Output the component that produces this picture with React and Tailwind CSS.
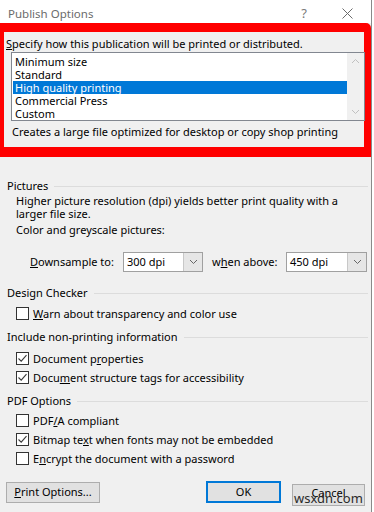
import React from 'react';

const font = { fontFamily: '"Noto Sans", "Open Sans", sans-serif' };

function SectionHeader({ label }) {
  return (
    <div className="flex items-center h-[16px]">
      <span className="text-[11px] leading-[16px] text-black">{label}</span>
      <div className="flex-1 h-px bg-[#dcdcdc] ml-[6px]" />
    </div>
  );
}

function Checkbox({ checked, children }) {
  return (
    <div className="flex items-center h-[19px] pl-[9px]">
      <div className="w-[13px] h-[13px] border border-[#333333] bg-white flex items-center justify-center">
        {checked && (
          <svg width="11" height="11" viewBox="0 0 11 11">
            <path d="M1.5 5.5 L4.2 8.2 L9.5 2.2" fill="none" stroke="#3a3a3a" strokeWidth="1.1" />
          </svg>
        )}
      </div>
      <span className="ml-[4px] text-[11px] leading-[16px] text-black">{children}</span>
    </div>
  );
}

function Chevron() {
  return (
    <svg width="9" height="6" viewBox="0 0 9 6">
      <path d="M1 1 L4.5 4.5 L8 1" fill="none" stroke="#666666" strokeWidth="1" />
    </svg>
  );
}

function Select({ value, width }) {
  return (
    <div className={`flex h-[20px] border border-[#a0a0a0] bg-white ${width}`}>
      <span className="flex-1 pl-[3px] text-[11px] leading-[18px] text-black">{value}</span>
      <div className="w-[19px] border-l border-[#c8c8c8] bg-[#e6e6e6] flex items-center justify-center">
        <Chevron />
      </div>
    </div>
  );
}

export default function App() {
  const items = ['Minimum size', 'Standard', 'High quality printing', 'Commercial Press', 'Custom'];
  const selected = 2;

  return (
    <div className="w-[374px] h-[512px] bg-white relative overflow-hidden" style={font}>
      <div className="w-[372px] h-[512px] border-r border-[#8a8a8a] bg-[#f0f0f0] flex flex-col">
        {/* title bar */}
        <div className="h-[23px] bg-white flex items-center pl-[8px] pr-[18px]">
          <span className="text-[11.5px] text-[#6b6b6b] leading-[16px] mt-[4px]">Publish Options</span>
          <span className="ml-auto text-[13px] text-[#7a7a7a] mt-[4px]">?</span>
          <svg className="ml-[35px] mt-[4px]" width="11" height="11" viewBox="0 0 11 11">
            <path d="M0.5 0.5 L10.5 10.5 M10.5 0.5 L0.5 10.5" stroke="#6b6b6b" strokeWidth="1" />
          </svg>
        </div>

        {/* highlighted section */}
        <div className="h-[134px] border-[#ff0000] border-t-[9px] border-l-[4px] border-r-[7px] border-b-[10px] rounded-tr-[5px] bg-[#f0f0f0] flex flex-col">
          <div className="pl-[2px] pt-[4px] text-[11px] leading-[15px] text-black whitespace-nowrap">
            <span className="underline">S</span>pecify how this publication will be printed or distributed.
          </div>
          <div className="mt-[1px] ml-[7px] -mr-[1px] h-[69px] border border-[#828790] bg-white flex">
            <div className="flex-1 pt-[2px] pl-[1px]">
              {items.map((it, i) => (
                <div
                  key={it}
                  className={`h-[13px] leading-[13px] text-[11px] pl-[2px] ${i === selected ? 'bg-[#0078d7] text-white' : 'text-black'}`}
                >
                  {it}
                </div>
              ))}
            </div>
            <div className="w-[17px] bg-[#f0f0f0] flex flex-col items-center justify-between py-[5px]">
              <svg width="9" height="6" viewBox="0 0 9 6">
                <path d="M1 5 L4.5 1.5 L8 5" fill="none" stroke="#c0c0c0" strokeWidth="1" />
              </svg>
              <svg width="9" height="6" viewBox="0 0 9 6">
                <path d="M1 1 L4.5 4.5 L8 1" fill="none" stroke="#c0c0c0" strokeWidth="1" />
              </svg>
            </div>
          </div>
          <div className="pl-[8px] mt-[3px] text-[11px] leading-[15px] text-black whitespace-nowrap">
            Creates a large file optimized for desktop or copy shop printing
          </div>
        </div>

        {/* body */}
        <div className="flex flex-col pl-[7px] pr-[3px]">
          <div className="mt-[21px]">
            <SectionHeader label="Pictures" />
          </div>
          <div className="pl-[9px] text-[11px] leading-[13px] text-black">
            Higher picture resolution (dpi) yields better print quality with a<br />larger file size.
          </div>
          <div className="pl-[9px] mt-[2px] h-[16px] text-[11px] leading-[16px] text-black">
            Color and greyscale pictures:
          </div>
          <div className="mt-[14px] flex items-center h-[20px] pl-[23px] pr-[1px]">
            <span className="text-[11px] leading-[16px] text-black w-[93px]">
              <span className="underline">D</span>ownsample to:
            </span>
            <Select value="300 dpi" width="w-[80px]" />
            <span className="ml-[9px] text-[11px] leading-[16px] text-black w-[74px]">
              w<span className="underline">h</span>en above:
            </span>
            <Select value="450 dpi" width="w-[81px]" />
          </div>

          <div className="mt-[13px]">
            <SectionHeader label="Design Checker" />
          </div>
          <div className="mt-[3px]">
            <Checkbox>
              <span className="underline">W</span>arn about transparency and color use
            </Checkbox>
          </div>

          <div className="mt-[6px]">
            <SectionHeader label="Include non-printing information" />
          </div>
          <div className="mt-[4px]">
            <Checkbox checked>
              Document p<span className="underline">r</span>operties
            </Checkbox>
            <Checkbox checked>
              Docu<span className="underline">m</span>ent structure tags for accessibility
            </Checkbox>
          </div>

          <div className="mt-[6px]">
            <SectionHeader label="PDF Options" />
          </div>
          <div className="mt-[2px]">
            <Checkbox>
              PDF<span className="underline">/</span>A compliant
            </Checkbox>
            <Checkbox checked>
              Bitmap te<span className="underline">x</span>t when fonts may not be embedded
            </Checkbox>
            <Checkbox>
              E<span className="underline">n</span>crypt the document with a password
            </Checkbox>
          </div>

          <div className="mt-[11px] flex items-center pr-[3px]">
            <button className="-ml-[1px] w-[94px] h-[21px] bg-[#e1e1e1] border border-[#adadad] text-[11px] leading-[16px] text-black">
              <span className="underline">P</span>rint Options...
            </button>
            <button className="ml-auto w-[75px] h-[22px] bg-[#e1e1e1] border-2 border-[#0078d7] text-[11px] leading-[16px] text-black">
              OK
            </button>
            <div className="relative ml-[11px]">
              <button className="w-[73px] h-[22px] bg-[#e1e1e1] border border-[#adadad] text-[11px] leading-[16px] text-black pb-[3px]">
                Cancel
              </button>
              <span className="absolute left-[2px] top-[11px] text-[13px] leading-[16px] text-[#2a2a2a]">
                wsxdn.com
              </span>
            </div>
          </div>
        </div>
      </div>
    </div>
  );
}
